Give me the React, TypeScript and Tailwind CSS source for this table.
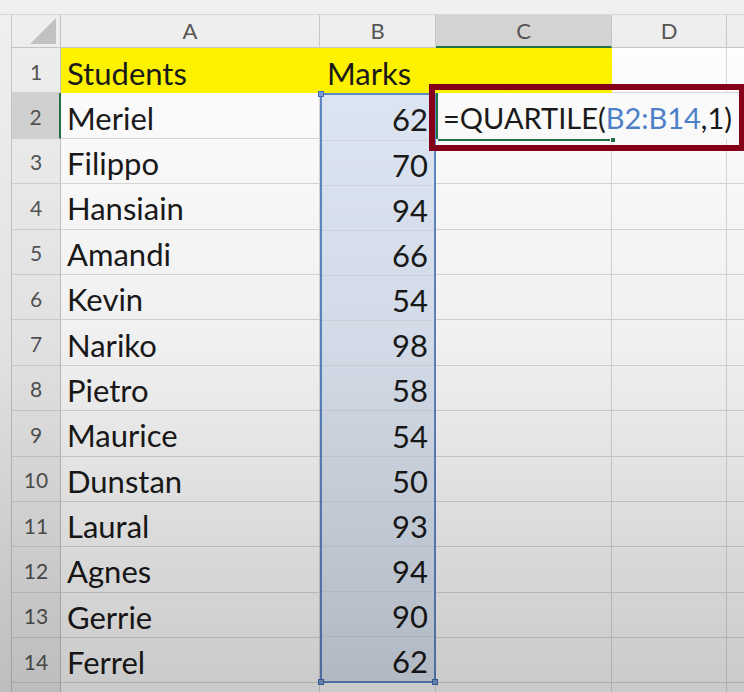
import React from 'react';

const rows = [
  ['Meriel', 62],
  ['Filippo', 70],
  ['Hansiain', 94],
  ['Amandi', 66],
  ['Kevin', 54],
  ['Nariko', 98],
  ['Pietro', 58],
  ['Maurice', 54],
  ['Dunstan', 50],
  ['Laural', 93],
  ['Agnes', 94],
  ['Gerrie', 90],
  ['Ferrel', 62],
] as const;

const font = { fontFamily: 'Lato, "Open Sans", sans-serif' };

function RowHead({ n, active }: { n: number | string; active?: boolean }) {
  return (
    <div
      className={`flex items-center justify-center border-b border-[#d4d4d4] pt-[3px] text-[21px] leading-[30px] text-[#555] ${
        active ? 'border-r-2 border-r-[#217346] bg-[#d4d4d4]' : 'border-r border-r-[#c4c4c4] bg-[#efefef]'
      }`}
    >
      {n}
    </div>
  );
}

function Handle({ className }: { className: string }) {
  return <div className={`absolute h-[6px] w-[6px] border border-[#3e6fb8] bg-[#7ea0d6] ${className}`} />;
}

export default function App() {
  return (
    <div className="relative h-[692px] w-[744px] overflow-hidden bg-[#f0f0f0]" style={font}>
      <div className="h-[15px] border-b border-[#d8d8d8] bg-[#f0f0f0]" />
      <div className="flex h-[677px]">
        <div className="w-[12px] border-r border-[#c8c8c8] bg-[#f0f0f0]" />
        <div className="grid flex-1 grid-cols-[49px_259px_116px_176px_115px_1fr] grid-rows-[33px_repeat(14,45.4px)_1fr] bg-white text-[#1a1a1a]">
          {/* column headers */}
          <div className="relative border-b border-r border-[#c4c4c4] bg-[#efefef]">
            <svg className="absolute bottom-[3px] right-[4px]" width="26" height="26" viewBox="0 0 26 26">
              <polygon points="26,0 26,26 0,26" fill="#c2c2c2" />
            </svg>
          </div>
          <div className="flex items-center justify-center border-b border-r border-[#c8c8c8] bg-[#efefef] text-[22px] leading-[30px] text-[#555]">A</div>
          <div className="flex items-center justify-center border-b border-r border-[#c8c8c8] bg-[#efefef] text-[22px] leading-[30px] text-[#555]">B</div>
          <div className="flex items-center justify-center border-b-2 border-r border-b-[#217346] border-r-[#c8c8c8] bg-[#d4d4d4] text-[22px] leading-[30px] text-[#555]">C</div>
          <div className="flex items-center justify-center border-b border-r border-[#c8c8c8] bg-[#efefef] text-[22px] leading-[30px] text-[#555]">D</div>
          <div className="border-b border-[#c8c8c8] bg-[#efefef]" />

          {/* row 1 */}
          <RowHead n={1} />
          <div className="flex items-center bg-[#fff500] pl-[6px] pt-[4px] text-[31px] leading-[38px]">Students</div>
          <div className="flex items-center bg-[#fff500] pl-[7px] pt-[4px] text-[31px] leading-[38px]">Marks</div>
          <div className="bg-[#fff500]" />
          <div className="border-b border-r border-[#dadada]" />
          <div className="border-b border-[#dadada]" />

          {/* data rows: row headers + A column */}
          {rows.map(([name], i) => (
            <React.Fragment key={name + i}>
              <div style={{ gridRow: i + 3, gridColumn: 1 }} className="contents">
                <RowHead n={i + 2} active={i === 0} />
              </div>
              <div
                style={{ gridRow: i + 3, gridColumn: 2 }}
                className="flex items-center border-b border-r border-[#dadada] pl-[6px] pt-[4px] text-[31px] leading-[38px]"
              >
                {name}
              </div>
            </React.Fragment>
          ))}

          {/* selection B2:B14 */}
          <div
            style={{ gridRow: '3 / 16', gridColumn: 3 }}
            className="relative flex min-h-0 flex-col border-2 border-[#5f88c6] bg-[#dfe8f5]"
          >
            {rows.map(([name, mark], i) => (
              <div
                key={name + 'm' + i}
                className={`flex min-h-0 flex-1 basis-0 items-center justify-end pr-[6px] pt-[4px] text-[31px] leading-[38px] ${
                  i < rows.length - 1 ? 'border-b border-[#d3dae4]' : ''
                }`}
              >
                {mark}
              </div>
            ))}
            <Handle className="left-[-4px] top-[-4px]" />
            <Handle className="bottom-[-4px] left-[-4px]" />
            <Handle className="bottom-[-4px] right-[-4px]" />
          </div>

          {/* C2 in edit mode */}
          <div
            style={{ gridRow: 3, gridColumn: '4 / 7' }}
            className="relative z-10 flex items-center whitespace-nowrap border-l-2 border-[#217346] bg-white pl-[5px] pt-[4px] text-[29px] leading-[38px]"
          >
            <span>=QUARTILE(</span>
            <span className="text-[#4f82cc]">B2:B14</span>
            <span>,1)</span>
            <div className="absolute bottom-[-2px] left-0 h-[2px] w-[176px] bg-[#217346]" />
            <div className="absolute bottom-[-4px] left-[172px] h-[6px] w-[6px] border border-white bg-[#217346]" />
          </div>

          {/* remaining cells C..E */}
          {rows.slice(1).map((_, i) => (
            <React.Fragment key={'r' + i}>
              <div style={{ gridRow: i + 4, gridColumn: 4 }} className="border-b border-r border-[#dadada]" />
              <div style={{ gridRow: i + 4, gridColumn: 5 }} className="border-b border-r border-[#dadada]" />
              <div style={{ gridRow: i + 4, gridColumn: 6 }} className="border-b border-[#dadada]" />
            </React.Fragment>
          ))}

          {/* partial last row */}
          <div style={{ gridRow: 16, gridColumn: 1 }} className="border-r border-[#c4c4c4] bg-[#efefef]" />
          <div style={{ gridRow: 16, gridColumn: 2 }} className="border-r border-[#dadada]" />
          <div style={{ gridRow: 16, gridColumn: 3 }} className="border-r border-[#dadada]" />
          <div style={{ gridRow: 16, gridColumn: 4 }} className="border-r border-[#dadada]" />
          <div style={{ gridRow: 16, gridColumn: 5 }} className="border-r border-[#dadada]" />
        </div>
      </div>

      {/* annotation box around the formula */}
      <div className="absolute left-[429px] top-[84px] z-20 h-[67px] w-[316px] border-[6px] border-[#870018]" />

      {/* video vignette */}
      <div className="pointer-events-none absolute inset-0 z-30 bg-gradient-to-b from-transparent via-black/[0.06] to-black/[0.21]" />
    </div>
  );
}
